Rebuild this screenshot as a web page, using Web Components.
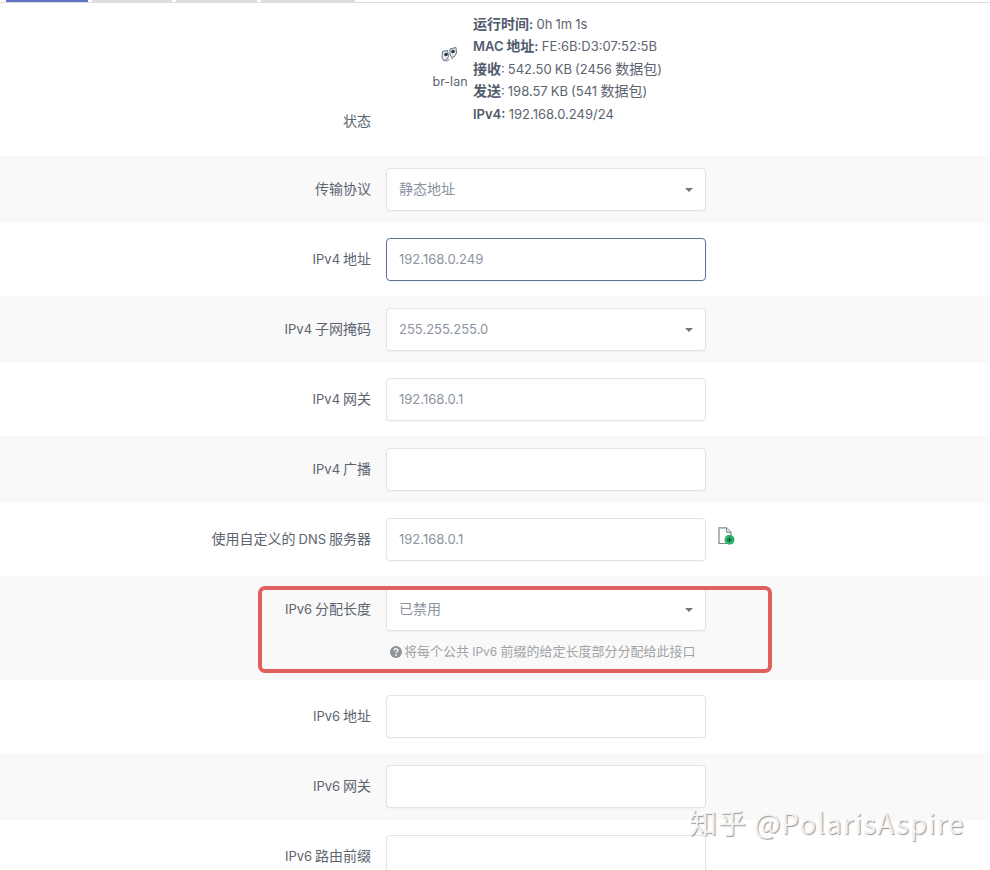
<!DOCTYPE html>
<html lang="zh"><head><meta charset="utf-8"><title>接口</title>
<style>
html,body{margin:0;padding:0;height:870px;overflow:hidden;background:#fff}
body{font:14px/22.4px Inter,"Noto Sans CJK SC",sans-serif;color:#5c6470;position:relative}
.l{font-size:13px}
hint-note .l{font-size:12px}
</style></head><body>
<net-page>
<tab-bar></tab-bar>
<form-row kind="status"><span slot="label">状态</span><net-status></net-status></form-row>
<form-row kind="alt"><span slot="label">传输协议</span><field-box select>静态地址</field-box></form-row>
<form-row><span slot="label"><span class="l">IPv4</span> 地址</span><field-box focus><span class="l">192.168.0.249</span></field-box></form-row>
<form-row kind="alt"><span slot="label"><span class="l">IPv4</span> 子网掩码</span><field-box select><span class="l">255.255.255.0</span></field-box></form-row>
<form-row><span slot="label"><span class="l">IPv4</span> 网关</span><field-box><span class="l">192.168.0.1</span></field-box></form-row>
<form-row kind="alt"><span slot="label"><span class="l">IPv4</span> 广播</span><field-box></field-box></form-row>
<form-row><span slot="label">使用自定义的 <span class="l">DNS</span> 服务器</span><field-box><span class="l">192.168.0.1</span></field-box><add-icon slot="after"></add-icon></form-row>
<form-row kind="alt" marked><span slot="label"><span class="l">IPv6</span> 分配长度</span><field-box select>已禁用</field-box><hint-note slot="note">将每个公共 <span class="l">IPv6</span> 前缀的给定长度部分分配给此接口</hint-note></form-row>
<form-row><span slot="label"><span class="l">IPv6</span> 地址</span><field-box></field-box></form-row>
<form-row kind="alt"><span slot="label"><span class="l">IPv6</span> 网关</span><field-box></field-box></form-row>
<form-row><span slot="label"><span class="l">IPv6</span> 路由前缀</span><field-box></field-box></form-row>
</net-page>
<water-mark>知乎 @PolarisAspire</water-mark>
<script>
function def(name,css,html){
  customElements.define(name,class extends HTMLElement{
    constructor(){super();const r=this.attachShadow({mode:'open'});r.innerHTML='<style>'+css+'</style>'+html;}
  });
}
def('net-page',':host{display:block}','<slot></slot>');
def('tab-bar',`:host{display:flex;height:2px;border-bottom:1px solid #dcdcdc;padding-left:6px;gap:4px}
 i{display:block;height:2px;background:#dedede}
 i:first-of-type{background:#5e72c8}`,
 '<i style="width:82px"></i><i style="width:80px"></i><i style="width:81px"></i><i style="width:94px"></i>');
def('form-row',`:host{display:block;position:relative;padding:15px 0;background:#fff}
 :host([kind=alt]){padding:12px 0;background:#f9f9f9}
 :host([kind=status]){padding:10px 0 0;height:143px}
 .r{display:grid;grid-template-columns:371px 320px auto;column-gap:15px;align-items:center}
 .l{text-align:right;white-space:nowrap;word-spacing:-1px}
 :host([kind=status]) .r{align-items:start}
 :host([kind=status]) .l{padding-top:97px}
 .a{margin-left:-3px;line-height:0}
 .n{grid-column:2;margin-top:9px;height:28px}
 .m{display:none;position:absolute;left:258px;top:10px;width:506px;height:79px;border:4px solid #df605d;border-radius:7px;pointer-events:none}
 :host([marked]) .m{display:block}
 :host([marked]) .n{display:block}
 :host(:not([marked])) .n{display:none}
 `,
 '<div class="r"><div class="l"><slot name="label"></slot></div><div><slot></slot></div><div class="a"><slot name="after"></slot></div><div class="n"><slot name="note"></slot></div></div><div class="m"></div>');
def('field-box',`:host{display:block;box-sizing:border-box;height:43px;width:320px;background:#fff;border:1px solid #e1e3e6;border-radius:4px;padding:0 12px;line-height:39px;color:#8b93a0;position:relative;box-shadow:0 1px 2px rgba(50,50,93,.05)}
 :host([focus]){border-color:#5f7396}
 .c{display:none;position:absolute;right:12px;top:19px;width:0;height:0;border:4.500px solid transparent;border-top:4.500px solid #777;border-bottom:0}
 :host([select]) .c{display:block}`,
 '<slot></slot><span class="c"></span>');
def('net-status',`:host{display:flex;padding-left:47px}
 .d{width:34px;display:flex;flex-direction:column;align-items:center;padding-top:33px;font-size:12.5px;line-height:20px;color:#5c6470;white-space:nowrap}
 .d svg{display:block;margin-bottom:9px;margin-left:-2px}
 .i{margin-left:6px;white-space:nowrap;word-spacing:-.6px}
 .i div{height:22.4px}
 .t{font-size:13px}
 b{font-weight:700;color:#525c6e}
 b .t{font-weight:600}`,
 `<div class="d"><svg width="17" height="17" viewBox="0 0 17 17"><path d="M1.5 5.5l5-1 1 6-2 3.500-3 .5-1.500-3z" fill="#e8edf2" stroke="#66707c"/><path d="M9 3l6-1.500 .5 5.500-2 3.500-2.500 1-2-2.500z" fill="#e4eaf0" stroke="#66707c"/><circle cx="5" cy="8.500" r="1.800" fill="#2d333b"/><circle cx="12" cy="5.500" r="1.800" fill="#2d333b"/><path d="M4 14.500c2 1 3.500 .5 4-1.500M10 12c.5 1 1 1 2 .5" fill="none" stroke="#7b8794"/></svg><span>br-lan</span></div>
 <div class="i"><div><b>运行时间<span class="t">:</span></b> <span class="t">0h 1m 1s</span></div><div><b><span class="t">MAC</span> 地址<span class="t">:</span></b> <span class="t">FE:6B:D3:07:52:5B</span></div><div><b>接收</b><span class="t">: 542.50 KB (2456</span> 数据包<span class="t">)</span></div><div><b>发送</b><span class="t">: 198.57 KB (541</span> 数据包<span class="t">)</span></div><div><b><span class="t">IPv4:</span></b> <span class="t">192.168.0.249/24</span></div></div>`);
def('add-icon',':host{display:block;width:18px;height:19px;margin-top:-7px}',
 `<svg width="18" height="19" viewBox="0 0 18 19"><path d="M1 .8h7.500l4.500 4.500V16.500H1z" fill="#fff" stroke="#7d8690" stroke-width="1.200"/><path d="M8.500 .8v4.500h4.500" fill="#e4e7ea" stroke="#7d8690"/><circle cx="11.500" cy="12.800" r="5" fill="#2fb56b"/><path d="M9 12.800h5M11.500 10.300v5" stroke="#0d5a33" stroke-width="1.300"/></svg>`);
def('hint-note',`:host{display:flex;align-items:center;gap:2px;padding-left:4px;font-size:13px;line-height:22px;color:#a0a4a8;white-space:nowrap;word-spacing:-.5px}
 svg{flex:none}`,
 `<svg width="12" height="12" viewBox="0 0 11 11"><circle cx="5.500" cy="5.500" r="5.500" fill="#8f9498"/><path d="M3.800 4.200c0-2.200 3.500-2.200 3.500-.1 0 1.200-1.700 1.300-1.700 2.500" fill="none" stroke="#f9f9f9" stroke-width="1.200"/><circle cx="5.500" cy="8.400" r=".8" fill="#f9f9f9"/></svg><span><slot></slot></span>`);
def('water-mark',`:host{position:absolute;left:689px;top:801px;font:28px/42px "Noto Sans CJK SC","Noto Sans",sans-serif;letter-spacing:.9px;color:rgba(248,248,248,.92);text-shadow:1px 1px 1px #9a9a9a;white-space:nowrap;pointer-events:none}`,'<slot></slot>');
</script>
</body></html>
